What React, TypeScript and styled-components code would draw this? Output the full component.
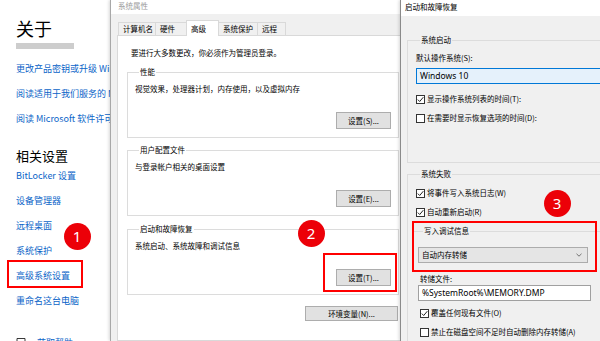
import React from "react";
import styled, { createGlobalStyle } from "styled-components";

const GlobalStyle = createGlobalStyle`
  * { box-sizing: border-box; }
  html, body { margin: 0; padding: 0; background: #fff; }
  body {
    font-family: "Noto Sans CJK SC", "Noto Sans", sans-serif;
    overflow: hidden;
  }
`;

const Desktop = styled.div`
  position: relative;
  width: 600px;
  height: 341px;
  overflow: hidden;
  background: #fff;
`;

/* ---------- settings page (left) ---------- */
const SettingsPage = styled.div`
  display: flex;
  flex-direction: column;
  align-items: flex-start;
  width: 111px;
  overflow: hidden;
  padding: 18px 0 0 16px;
`;
const PageTitle = styled.h1`
  margin: 0;
  font-size: 18px;
  line-height: 21px;
  font-weight: 400;
  color: #000;
`;
const Redacted = styled.div`
  margin-top: 4px;
  width: 58px;
  height: 6px;
  background: #cdcdcd;
`;
const LinkGroup = styled.div<{ $top: number }>`
  display: flex;
  flex-direction: column;
  margin-top: ${(p) => p.$top}px;
`;
const PageLink = styled.a`
  display: block;
  height: 25px;
  line-height: 25px;
  font-size: 9px;
  color: #0a64c8;
  white-space: nowrap;
  text-decoration: none;
`;
const SectionTitle = styled.h2`
  margin: 17px 0 0;
  font-size: 13px;
  line-height: 15px;
  font-weight: 400;
  color: #000;
`;
const HelpRow = styled.div`
  display: flex;
  align-items: center;
  gap: 11px;
  height: 25px;
  margin-top: 17px;
  font-size: 9px;
  color: #0a64c8;
  white-space: nowrap;
`;

/* ---------- dialog windows ---------- */
const Window = styled.div<{ $left: number; $width: number; $active?: boolean }>`
  position: absolute;
  top: 0;
  left: ${(p) => p.$left}px;
  width: ${(p) => p.$width}px;
  height: 341px;
  display: flex;
  flex-direction: column;
  background: #f0f0f0;
  border-left: 1px solid ${(p) => (p.$active ? "#8a8a8a" : "#a8a8a8")};
  box-shadow: -1px 0 3px rgba(0, 0, 0, 0.16);
  font-size: 7.5px;
  line-height: 10px;
  color: #000;
`;
const TitleBar = styled.div<{ $active?: boolean; $height: number; $pad: number }>`
  height: ${(p) => p.$height}px;
  line-height: ${(p) => p.$height - 3}px;
  padding-left: ${(p) => p.$pad}px;
  background: #fff;
  color: ${(p) => (p.$active ? "#000" : "#9a9a9a")};
  white-space: nowrap;
`;
const DialogBody = styled.div<{ $pad: string }>`
  flex: 1;
  display: flex;
  flex-direction: column;
  padding: ${(p) => p.$pad};
  min-height: 0;
`;

const TabStrip = styled.div`
  position: relative;
  z-index: 1;
  display: flex;
  align-items: flex-end;
  height: 15px;
  padding-left: 1px;
`;
const Tab = styled.div<{ $w: number; $selected?: boolean }>`
  width: ${(p) => p.$w}px;
  height: ${(p) => (p.$selected ? 16 : 13)}px;
  margin-bottom: ${(p) => (p.$selected ? -1 : 0)}px;
  margin-left: -1px;
  padding: ${(p) => (p.$selected ? "3px" : "1px")} 0 0 4px;
  border: 1px solid #d9d9d9;
  border-bottom: none;
  background: ${(p) => (p.$selected ? "#fff" : "#f0f0f0")};
  white-space: nowrap;
  &:first-child {
    margin-left: 0;
  }
`;
const TabPanel = styled.div`
  flex: 1;
  display: flex;
  flex-direction: column;
  padding: 0 9px;
  background: #fff;
  border: 1px solid #d9d9d9;
`;
const Intro = styled.div`
  margin-top: 12px;
  padding-left: 4px;
  white-space: nowrap;
`;

const GroupBox = styled.fieldset<{ $mt: number; $ml?: number; $pad: string; $open?: boolean }>`
  display: block;
  margin: ${(p) => p.$mt}px 0 0 ${(p) => p.$ml ?? 0}px;
  padding: ${(p) => p.$pad};
  min-width: 0;
  border: 1px solid #dcdcdc;
  ${(p) => (p.$open ? "border-left: none; border-bottom: none;" : "")}
`;
const Legend = styled.legend<{ $ml: number; $bg: string }>`
  margin-left: ${(p) => p.$ml}px;
  padding: 0 1px;
  font-size: 7.5px;
  line-height: 10px;
  background: ${(p) => p.$bg};
  white-space: nowrap;
`;
const GroupText = styled.div<{ $mt: number; $pl?: number }>`
  margin-top: ${(p) => p.$mt}px;
  padding-left: ${(p) => p.$pl ?? 0}px;
  white-space: nowrap;
`;
const ButtonRow = styled.div<{ $mt: number; $mr?: number }>`
  display: flex;
  justify-content: flex-end;
  margin-top: ${(p) => p.$mt}px;
  margin-right: ${(p) => p.$mr ?? 0}px;
`;
const DlgButton = styled.div<{ $w: number; $h: number }>`
  display: flex;
  align-items: center;
  justify-content: center;
  width: ${(p) => p.$w}px;
  height: ${(p) => p.$h}px;
  background: #e1e1e1;
  border: 1px solid #adadad;
  white-space: nowrap;
`;

const Combo = styled.div<{ $w: number; $focused?: boolean }>`
  display: flex;
  align-items: center;
  justify-content: space-between;
  width: ${(p) => p.$w}px;
  height: 16px;
  padding: 0 5px 0 3px;
  background: ${(p) => (p.$focused ? "#e5f1fb" : "#e5e5e5")};
  border: 1px solid ${(p) => (p.$focused ? "#0078d7" : "#acacac")};
  white-space: nowrap;
`;
const LatinText = styled.span`
  font-family: "Noto Sans", "Noto Sans CJK SC", sans-serif;
  font-size: 8.5px;
`;
const TextInput = styled.div<{ $w: number }>`
  display: flex;
  align-items: center;
  width: ${(p) => p.$w}px;
  height: 16px;
  padding-left: 3px;
  background: #fff;
  border: 1px solid #a0a0a0;
  white-space: nowrap;
`;
const CheckRow = styled.div<{ $mt: number; $ml?: number }>`
  display: flex;
  align-items: center;
  gap: 2px;
  height: 10px;
  margin-top: ${(p) => p.$mt}px;
  margin-left: ${(p) => p.$ml ?? 0}px;
  white-space: nowrap;
`;
const Box = styled.span`
  display: inline-flex;
  align-items: center;
  justify-content: center;
  width: 9px;
  height: 9px;
  flex: none;
  background: #fff;
  border: 1px solid #333;
`;

/* ---------- annotations ---------- */
const Highlight = styled.div<{ $x: number; $y: number; $w: number; $h: number }>`
  position: absolute;
  left: ${(p) => p.$x}px;
  top: ${(p) => p.$y}px;
  width: ${(p) => p.$w}px;
  height: ${(p) => p.$h}px;
  border: 2px solid #f00;
  z-index: 5;
`;
const Badge = styled.div<{ $cx: number; $cy: number }>`
  position: absolute;
  left: ${(p) => p.$cx - 13.5}px;
  top: ${(p) => p.$cy - 13.5}px;
  width: 27px;
  height: 27px;
  border-radius: 50%;
  background: #ec0008;
  color: #fff;
  display: flex;
  align-items: center;
  justify-content: center;
  font-family: "Noto Sans", "Liberation Sans", sans-serif;
  font-size: 15px;
  z-index: 6;
`;

const CheckBox = ({ checked, label, mt, ml }: { checked?: boolean; label: string; mt: number; ml?: number }) => (
  <CheckRow $mt={mt} $ml={ml}>
    <Box>
      {checked && (
        <svg width="7" height="7" viewBox="0 0 7 7">
          <path d="M0.8 3.6 L2.7 5.5 L6.3 1.2" fill="none" stroke="#222" strokeWidth="1" />
        </svg>
      )}
    </Box>
    <span>{label}</span>
  </CheckRow>
);

const Chevron = () => (
  <svg width="6" height="4" viewBox="0 0 6 4">
    <path d="M0.5 0.8 L3 3.2 L5.5 0.8" fill="none" stroke="#555" strokeWidth="0.8" />
  </svg>
);

const HelpIcon = () => (
  <svg width="10" height="10" viewBox="0 0 10 10">
    <path d="M1 1.5 H9 V7 H4 L2 9 V7 H1 Z" fill="none" stroke="#222" strokeWidth="0.9" />
  </svg>
);

const aboutLinks = ["更改产品密钥或升级 Windows", "阅读适用于我们服务的 Microsoft 服务协议", "阅读 Microsoft 软件许可条款"];
const relatedLinks = ["BitLocker 设置", "设备管理器", "远程桌面", "系统保护", "高级系统设置", "重命名这台电脑"];
const tabs = [
  { name: "计算机名", w: 38 },
  { name: "硬件", w: 32 },
  { name: "高级", w: 33, selected: true },
  { name: "系统保护", w: 40 },
  { name: "远程", w: 29 },
];
const groups = [
  { title: "性能", text: "视觉效果，处理器计划，内存使用，以及虚拟内存", button: "设置(S)...", mt: 9 },
  { title: "用户配置文件", text: "与登录帐户相关的桌面设置", button: "设置(E)...", mt: 7 },
  { title: "启动和故障恢复", text: "系统启动、系统故障和调试信息", button: "设置(T)...", mt: 8 },
];

export default function App() {
  return (
    <Desktop>
      <GlobalStyle />

      <SettingsPage>
        <PageTitle>关于</PageTitle>
        <Redacted />
        <LinkGroup $top={6.5}>
          {aboutLinks.map((l) => (
            <PageLink key={l}>{l}</PageLink>
          ))}
        </LinkGroup>
        <SectionTitle>相关设置</SectionTitle>
        <LinkGroup $top={0}>
          {relatedLinks.map((l) => (
            <PageLink key={l}>{l}</PageLink>
          ))}
        </LinkGroup>
        <HelpRow>
          <HelpIcon />
          <span>获取帮助</span>
        </HelpRow>
      </SettingsPage>

      <Window $left={110} $width={305}>
        <TitleBar $height={14} $pad={7}>系统属性</TitleBar>
        <DialogBody $pad="6px 6px 0 6px">
          <TabStrip>
            {tabs.map((t) => (
              <Tab key={t.name} $w={t.w} $selected={t.selected}>
                {t.name}
              </Tab>
            ))}
          </TabStrip>
          <TabPanel>
            <Intro>要进行大多数更改，你必须作为管理员登录。</Intro>
            {groups.map((g) => (
              <GroupBox key={g.title} $mt={g.mt} $pad="0 7px 8px 7px">
                <Legend $ml={4} $bg="#fff">{g.title}</Legend>
                <GroupText $mt={7}>{g.text}</GroupText>
                <ButtonRow $mt={18}>
                  <DlgButton $w={55} $h={17}>{g.button}</DlgButton>
                </ButtonRow>
              </GroupBox>
            ))}
            <ButtonRow $mt={11} $mr={1}>
              <DlgButton $w={93} $h={15}>环境变量(N)...</DlgButton>
            </ButtonRow>
          </TabPanel>
        </DialogBody>
      </Window>

      <Window $left={400} $width={230} $active>
        <TitleBar $height={16} $pad={4} $active>启动和故障恢复</TitleBar>
        <DialogBody $pad="19px 0 0 6px">
          <GroupBox $mt={0} $pad="0 0 39px 8px">
            <Legend $ml={4} $bg="#f0f0f0">系统启动</Legend>
            <GroupText $mt={8}>默认操作系统(S):</GroupText>
            <GroupText $mt={5}>
              <Combo $w={200} $focused>
                <LatinText>Windows 10</LatinText>
              </Combo>
            </GroupText>
            <CheckBox mt={10} checked label="显示操作系统列表的时间(T):" />
            <CheckBox mt={9} label="在需要时显示恢复选项的时间(D):" />
          </GroupBox>

          <GroupBox $mt={6} $pad="0 0 20px 8px">
            <Legend $ml={4} $bg="#f0f0f0">系统失败</Legend>
            <CheckBox mt={9} checked label="将事件写入系统日志(W)" />
            <CheckBox mt={9} checked label="自动重新启动(R)" />
            <GroupBox $mt={9} $ml={-2} $pad="0 0 20px 4px" $open>
              <Legend $ml={5} $bg="#f0f0f0">写入调试信息</Legend>
              <GroupText $mt={11}>
                <Combo $w={170}>
                  <span>自动内存转储</span>
                  <Chevron />
                </Combo>
              </GroupText>
              <GroupText $mt={11} $pl={2}>转储文件:</GroupText>
              <GroupText $mt={1}>
                <TextInput $w={173}>
                  <LatinText>%SystemRoot%\MEMORY.DMP</LatinText>
                </TextInput>
              </GroupText>
              <CheckBox mt={7} ml={2} checked label="覆盖任何现有文件(O)" />
              <CheckBox mt={9} ml={2} label="禁止在磁盘空间不足时自动删除内存转储(A)" />
            </GroupBox>
          </GroupBox>
        </DialogBody>
      </Window>

      <Highlight $x={7} $y={260} $w={76} $h={28} />
      <Highlight $x={323} $y={253} $w={74} $h={39} />
      <Highlight $x={412} $y={221} $w={185} $h={51} />
      <Badge $cx={77} $cy={236}>1</Badge>
      <Badge $cx={311} $cy={233}>2</Badge>
      <Badge $cx={557} $cy={203}>3</Badge>
    </Desktop>
  );
}
